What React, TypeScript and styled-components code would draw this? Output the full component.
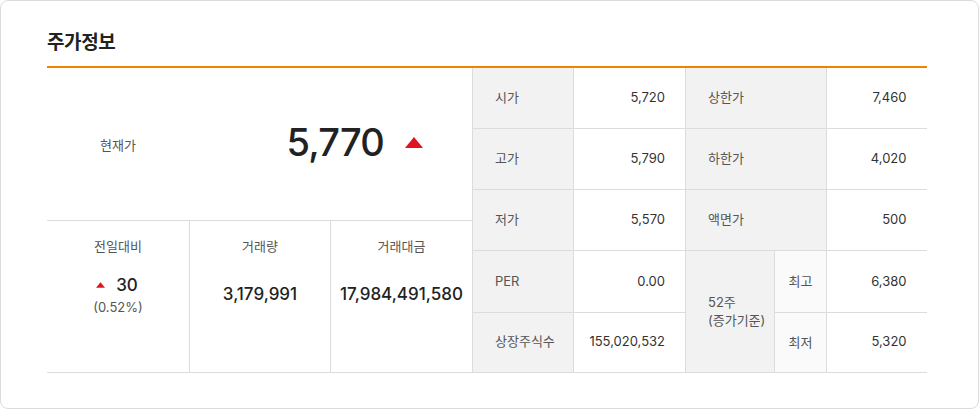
import React from 'react'
import { styled, createGlobalStyle } from 'styled-components'

const GlobalStyle = createGlobalStyle`
  body {
    margin: 0;
    font-family: "Inter", "Noto Sans CJK KR", sans-serif;
    color: #222;
    background: #fff;
  }
`

type Cell = { label: string; value: string }

const rows: [Cell, Cell][] = [
  [{ label: '시가', value: '5,720' }, { label: '상한가', value: '7,460' }],
  [{ label: '고가', value: '5,790' }, { label: '하한가', value: '4,020' }],
  [{ label: '저가', value: '5,570' }, { label: '액면가', value: '500' }],
]

const StockInfo = () => {
  return (
    <Card>
      <Title>주가정보</Title>
      <Body>
        <Summary>
          <Current>
            <CurrentLabel>현재가</CurrentLabel>
            <CurrentPrice>
              5,770
              <Up size={18} />
            </CurrentPrice>
          </Current>
          <Stats>
            <Stat>
              <StatLabel>전일대비</StatLabel>
              <Change>
                <Up size={9} />
                30
              </Change>
              <Rate>(0.52%)</Rate>
            </Stat>
            <Stat>
              <StatLabel>거래량</StatLabel>
              <StatValue>3,179,991</StatValue>
            </Stat>
            <Stat>
              <StatLabel>거래대금</StatLabel>
              <StatValue>17,984,491,580</StatValue>
            </Stat>
          </Stats>
        </Summary>
        <Table>
          <colgroup>
            <col style={{ width: 101 }} />
            <col style={{ width: 112 }} />
            <col style={{ width: 89 }} />
            <col style={{ width: 52 }} />
            <col style={{ width: 100 }} />
          </colgroup>
          <tbody>
            {rows.map(([a, b]) => (
              <tr key={a.label}>
                <Th>{a.label}</Th>
                <Td>{a.value}</Td>
                <Th colSpan={2}>{b.label}</Th>
                <Td>{b.value}</Td>
              </tr>
            ))}
            <tr>
              <Th>PER</Th>
              <Td>0.00</Td>
              <Th rowSpan={2}>
                52주
                <br />
                (증가기준)
              </Th>
              <SubTh>최고</SubTh>
              <Td>6,380</Td>
            </tr>
            <tr>
              <Th>상장주식수</Th>
              <Td>155,020,532</Td>
              <SubTh>최저</SubTh>
              <Td>5,320</Td>
            </tr>
          </tbody>
        </Table>
      </Body>
    </Card>
  )
}

const Up = ({ size }: { size: number }) => (
  <Arrow width={size} height={Math.round(size * 0.62)} viewBox="0 0 18 11">
    <path d="M9 0 L18 11 L0 11 Z" fill="#e0141e" />
  </Arrow>
)

export default function App() {
  return (
    <>
      <GlobalStyle />
      <StockInfo />
    </>
  )
}

const Card = styled.section`
  box-sizing: border-box;
  width: 979px;
  height: 409px;
  border: 1px solid #dcdcdc;
  border-radius: 8px;
  padding: 29px 51px 0 46px;
`

const Title = styled.h2`
  margin: 0;
  font-size: 19px;
  line-height: 26px;
  font-weight: 700;
  color: #222;
  letter-spacing: -0.4px;
  padding-bottom: 10px;
  border-bottom: 2px solid #f08300;
`

const Body = styled.div`
  display: flex;
  height: 305px;
`

const Summary = styled.div`
  width: 425px;
  display: flex;
  flex-direction: column;
`

const Current = styled.div`
  height: 152px;
  display: flex;
  align-items: center;
  border-bottom: 1px solid #dcdcdc;
`

const CurrentLabel = styled.div`
  width: 142px;
  text-align: center;
  font-size: 13px;
  color: #555;
`

const CurrentPrice = styled.div`
  flex: 1;
  display: flex;
  align-items: center;
  justify-content: flex-end;
  gap: 21px;
  padding-right: 49px;
  padding-bottom: 4px;
  font-size: 38px;
  font-weight: 500;
  letter-spacing: -0.8px;
  color: #222;
`

const Arrow = styled.svg`
  display: block;
  flex: none;
`

const Stats = styled.div`
  flex: 1;
  display: grid;
  grid-template-columns: 142px 141px 142px;
  border-bottom: 1px solid #dcdcdc;
`

const Stat = styled.div`
  display: flex;
  flex-direction: column;
  align-items: center;
  padding-top: 16px;
  & + & {
    border-left: 1px solid #dcdcdc;
  }
`

const StatLabel = styled.div`
  font-size: 13px;
  line-height: 18px;
  color: #555;
  margin-bottom: 27px;
`

const StatValue = styled.div`
  font-size: 17px;
  line-height: 24px;
  font-weight: 500;
  color: #222;
`

const Change = styled(StatValue)`
  display: flex;
  align-items: center;
  gap: 11px;
  margin-top: -9px;
  margin-left: -2px;
`

const Rate = styled.div`
  font-size: 13px;
  line-height: 20px;
  color: #555;
`

const Table = styled.table`
  width: 454px;
  table-layout: fixed;
  border-collapse: collapse;
  border-left: 1px solid #dcdcdc;
  font-size: 13px;
  tr {
    height: 61px;
  }
  tr:first-child,
  tr:last-child {
    height: 60px;
  }
`

const Th = styled.th`
  background: #f2f2f2;
  border: 1px solid #dcdcdc;
  border-top: none;
  text-align: left;
  font-weight: 400;
  color: #555;
  padding: 0 0 2px 22px;
  line-height: 18px;
`

const SubTh = styled.th`
  background: #fafafa;
  border: 1px solid #dcdcdc;
  text-align: center;
  font-weight: 400;
  color: #555;
  padding: 0 0 2px;
`

const Td = styled.td`
  border-bottom: 1px solid #dcdcdc;
  border-left: 1px solid #dcdcdc;
  text-align: right;
  color: #333;
  padding: 0 20px 2px 0;
`
